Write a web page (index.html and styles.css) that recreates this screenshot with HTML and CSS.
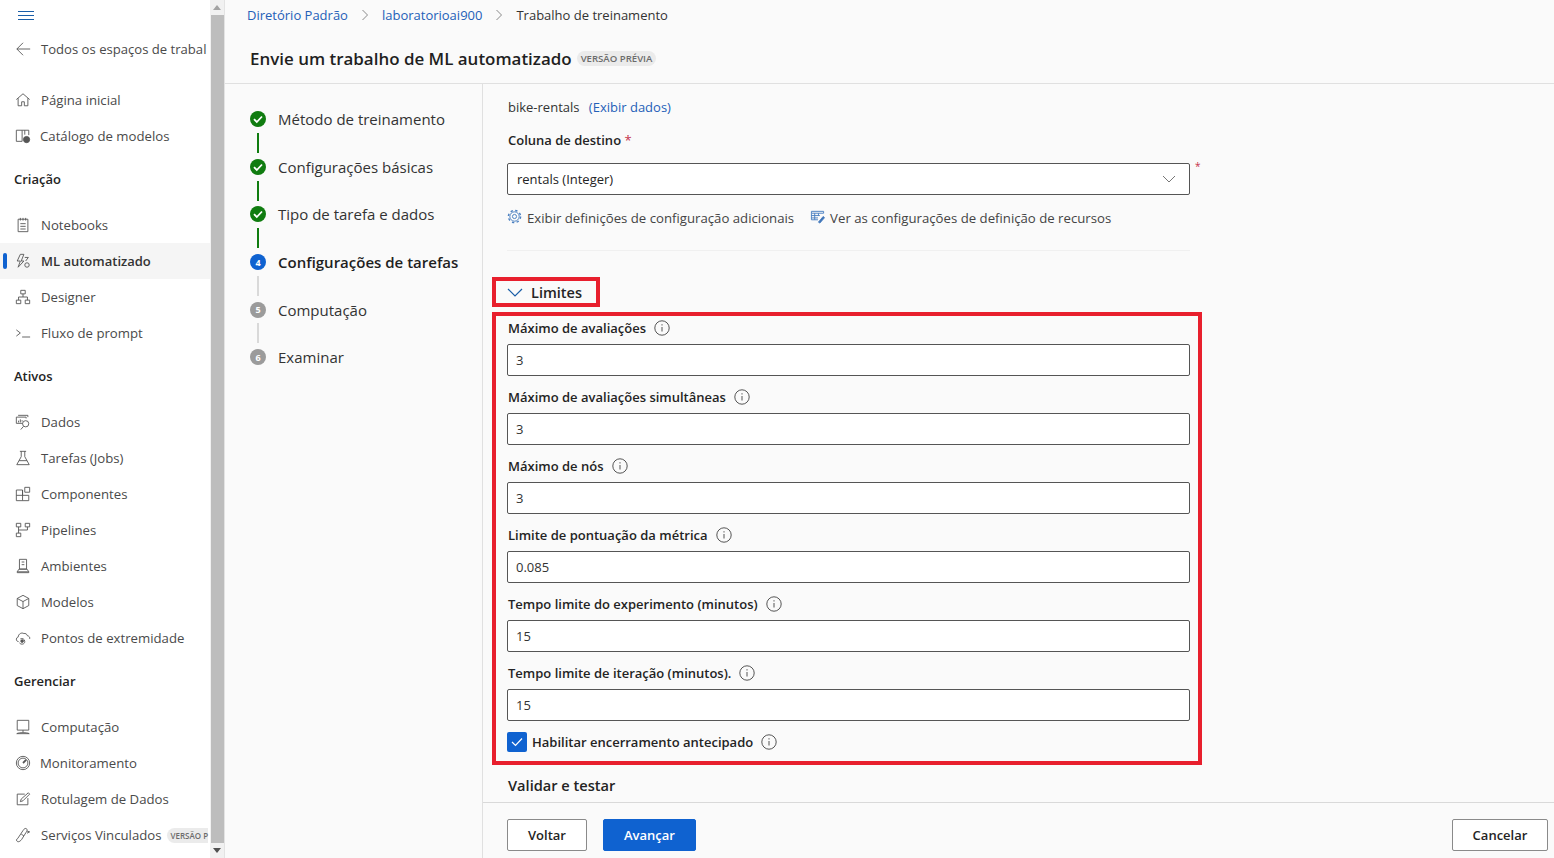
FILE: index.html
```html
<!DOCTYPE html>
<html lang="pt-BR">
<head>
    <meta charset="UTF-8">
    <meta name="viewport" content="width=device-width, initial-scale=1.0">
    <title>Trabalho de treinamento</title>
    <link rel="stylesheet" href="styles.css">
</head>
<body>

    <div class="sideBar">
        <div class="menuToggle">
            <svg width="16" height="10" viewBox="0 0 16 10"><path d="M0 .5h16M0 4.500h16M0 8.500h16" stroke="#1a5ea8" fill="none"/></svg>
        </div>

        <div class="navItem backItem">
            <svg class="navIcon" viewBox="0 0 18 18"><path d="M16.500 9H1.500M8.500 2l-7 7 7 7"/></svg>
            <span class="navText">Todos os espaços de trabal</span>
        </div>

        <div class="navGroup">
            <div class="navItem">
                <svg class="navIcon" viewBox="0 0 18 18"><path d="M1.500 8.500 9 2l7.500 6.500M3.500 7v8.500h4V11h3v4.500h4V7"/></svg>
                <span class="navText">Página inicial</span>
            </div>
            <div class="navItem tight">
                <svg class="navIcon" viewBox="0 0 18 18"><path d="M8 15H1.500V2.500H8zM8 2.500h7.500V8M11 2.500v5"/><circle cx="13" cy="13" r="3.500" fill="#555"/></svg>
                <span class="navText">Catálogo de modelos</span>
            </div>
        </div>

        <h3 class="navHeading">Criação</h3>
        <div class="navItem">
            <svg class="navIcon" viewBox="0 0 18 18"><path d="M3.500 2.500h11v14h-11zM6 1v3M9 1v3M12 1v3M6 7.500h6M6 10.500h6M6 13.500h6"/></svg>
            <span class="navText">Notebooks</span>
        </div>
        <div class="navItem active">
            <svg class="navIcon" viewBox="0 0 18 18"><path d="M10 1.500H6L2.500 9H6l-2.500 7L10 9H7zM11 5h4l-3 4"/><circle cx="13.500" cy="13.500" r="2.500"/></svg>
            <span class="navText">ML automatizado</span>
        </div>
        <div class="navItem">
            <svg class="navIcon" viewBox="0 0 18 18"><path d="M6.500 1.500h5v4h-5zM1.500 12.500h5v4h-5zM11.500 12.500h5v4h-5zM9 5.500V9M4 12.500V9h10v3.500"/></svg>
            <span class="navText">Designer</span>
        </div>
        <div class="navItem">
            <svg class="navIcon" viewBox="0 0 18 18"><path d="m1.500 5.500 4.500 3.500-4.500 3.500M8 13.500h9"/></svg>
            <span class="navText">Fluxo de prompt</span>
        </div>

        <h3 class="navHeading">Ativos</h3>
        <div class="navItem">
            <svg class="navIcon" viewBox="0 0 18 18"><path d="M3.500 1.500h11v2M1.500 3.500h11V5M1.500 3.500v7h7M4 7.500v2M6 6v3.500M8 7v1.500M9.500 14l-3 3.500"/><circle cx="12" cy="11" r="3.500"/></svg>
            <span class="navText">Dados</span>
        </div>
        <div class="navItem">
            <svg class="navIcon" viewBox="0 0 18 18"><path d="M5.500 1.500h7M7 1.500v6L2 16.500h14l-5-9v-6M4.500 12h9"/></svg>
            <span class="navText">Tarefas (Jobs)</span>
        </div>
        <div class="navItem">
            <svg class="navIcon" viewBox="0 0 18 18"><path d="M1.500 4.500h7v12h-7zM1.500 10.500h14v6h-7M8.500 4.500v6M11 1.500h5.500V7H11z"/></svg>
            <span class="navText">Componentes</span>
        </div>
        <div class="navItem">
            <svg class="navIcon" viewBox="0 0 18 18"><path d="M1.500 1.500h5v4h-5zM11.500 1.500h5v4h-5zM1.500 12.500h5v4h-5zM4 5.500v7M4 9h10V5.500"/></svg>
            <span class="navText">Pipelines</span>
        </div>
        <div class="navItem">
            <svg class="navIcon" viewBox="0 0 18 18"><path d="M5 1.500h8v11H5zM7.500 4.500h3M7.500 7.500h3M2.500 15.500l2-3h9l2 3zM2.500 15.500v1h13v-1"/></svg>
            <span class="navText">Ambientes</span>
        </div>
        <div class="navItem">
            <svg class="navIcon" viewBox="0 0 18 18"><path d="m9 1.500 6.500 3.500v8L9 16.500 2.500 13V5zM2.500 5 9 8.500 15.500 5M9 8.500v8"/></svg>
            <span class="navText">Modelos</span>
        </div>
        <div class="navItem">
            <svg class="navIcon" viewBox="0 0 18 18"><path d="M4 13C1.500 13 1 10.500 2 9c.3-.5 1-1 1.500-1C4 4 7.500 2.500 10 4c1.500-.5 3.500.5 4 2.500 2 .3 3 1.800 2.500 3.500M5 14.500c2 2.500 6 1.500 6-1.500s-3-4-5-3"/><circle cx="8" cy="12.500" r="1.500" fill="#555"/></svg>
            <span class="navText">Pontos de extremidade</span>
        </div>

        <h3 class="navHeading">Gerenciar</h3>
        <div class="navItem">
            <svg class="navIcon" viewBox="0 0 18 18"><path d="M2.500 1.500h13v11h-13zM9 12.500v2.500M2 16.500c2-1.500 12-1.500 14 0z"/></svg>
            <span class="navText">Computação</span>
        </div>
        <div class="navItem tight">
            <svg class="navIcon" viewBox="0 0 18 18"><circle cx="9" cy="9" r="7.500"/><circle cx="9" cy="9" r="5.500"/><path d="m9 9 3.500-3.500" stroke-width="2"/></svg>
            <span class="navText">Monitoramento</span>
        </div>
        <div class="navItem">
            <svg class="navIcon" viewBox="0 0 18 18"><path d="M14.500 8v7.500h-12v-12H11M6 12l1-3 8-7 1.500 1.500-7.500 7.500z"/></svg>
            <span class="navText">Rotulagem de Dados</span>
        </div>
        <div class="navItem">
            <svg class="navIcon" viewBox="0 0 18 18"><path d="M3 16.500c-2-1-1.500-3 0-3.500l6-9c1-2 3-3 4-2s.5 2.500-.5 4l-5 8c-1 1.500-3 3-4.500 2.500zM7 8l3 2M13.500 4.500l3 1-3 1.500"/></svg>
            <span class="navText">Serviços Vinculados</span>
            <span class="previewBadge small">VERSÃO P</span>
        </div>
    </div>

    <div class="scrollTrack">
        <div class="arrowUp"></div>
        <div class="scrollThumb"></div>
        <div class="arrowDown"></div>
    </div>

    <div class="mainArea">
        <div class="pageHeader">
            <div class="breadcrumb">
                <a class="link">Diretório Padrão</a>
                <svg class="crumbSep" viewBox="0 0 8 12"><path d="m1.500 1 5 5-5 5"/></svg>
                <a class="link">laboratorioai900</a>
                <svg class="crumbSep" viewBox="0 0 8 12"><path d="m1.500 1 5 5-5 5"/></svg>
                <span>Trabalho de treinamento</span>
            </div>
            <div class="titleRow">
                <h1>Envie um trabalho de ML automatizado</h1>
                <span class="previewBadge">VERSÃO PRÉVIA</span>
            </div>
        </div>

        <div class="pageBody">
            <div class="stepList">
                <div class="step">
                    <span class="stepDot done"><svg width="10" height="10" viewBox="0 0 10 10"><path d="m1 5.200 2.800 2.800L9 2.500" stroke="#fff" stroke-width="1.800" fill="none"/></svg></span>
                    <span>Método de treinamento</span>
                </div>
                <div class="stepLine done"></div>
                <div class="step">
                    <span class="stepDot done"><svg width="10" height="10" viewBox="0 0 10 10"><path d="m1 5.200 2.800 2.800L9 2.500" stroke="#fff" stroke-width="1.800" fill="none"/></svg></span>
                    <span>Configurações básicas</span>
                </div>
                <div class="stepLine done"></div>
                <div class="step">
                    <span class="stepDot done"><svg width="10" height="10" viewBox="0 0 10 10"><path d="m1 5.200 2.800 2.800L9 2.500" stroke="#fff" stroke-width="1.800" fill="none"/></svg></span>
                    <span>Tipo de tarefa e dados</span>
                </div>
                <div class="stepLine done"></div>
                <div class="step current">
                    <span class="stepDot">4</span>
                    <span>Configurações de tarefas</span>
                </div>
                <div class="stepLine"></div>
                <div class="step">
                    <span class="stepDot">5</span>
                    <span>Computação</span>
                </div>
                <div class="stepLine"></div>
                <div class="step">
                    <span class="stepDot">6</span>
                    <span>Examinar</span>
                </div>
            </div>

            <div class="rightColumn">
                <div class="formArea">
                    <div class="dataRow">bike-rentals <a class="link">(Exibir dados)</a></div>
                    <div class="targetLabel">Coluna de destino <span class="required">*</span></div>
                    <div class="selectRow">
                        <div class="selectBox">
                            <span>rentals (Integer)</span>
                            <svg width="14" height="8" viewBox="0 0 14 8"><path d="m1 1 6 6 6-6" stroke="#777" fill="none"/></svg>
                        </div>
                        <span class="required sideMark">*</span>
                    </div>
                    <div class="actionRow">
                        <span class="actionLink">
                            <svg class="actionIcon" viewBox="0 0 16 16"><circle cx="8" cy="8" r="2.200"/><circle cx="8" cy="8" r="5"/><circle cx="8" cy="8" r="6.500" stroke-width="1.500" stroke-dasharray="2.500 2.605"/></svg>
                            Exibir definições de configuração adicionais
                        </span>
                        <span class="actionLink">
                            <svg class="actionIcon" viewBox="0 0 16 16"><path d="M1.500 2.500h13v2h-13zM1.500 4.500v7h7M1.500 7h9M1.500 9.500h7M5 4.500v7M9 4.500V7"/><path d="m9 14 5-6 1.500 1.200-5 5.800z" fill="#3a6fb5"/></svg>
                            Ver as configurações de definição de recursos
                        </span>
                    </div>
                    <div class="divider"></div>

                    <div class="limitsTitle">
                        <svg width="16" height="9" viewBox="0 0 16 9"><path d="m1 1 7 7 7-7" stroke="#1a5ea8" stroke-width="1.200" fill="none"/></svg>
                        <span>Limites</span>
                    </div>

                    <div class="limitsBox">
                        <div class="field">
                            <label>Máximo de avaliações <svg class="infoIcon" viewBox="0 0 16 16"><circle cx="8" cy="8" r="7.200"/><path d="M8 7v4.500M8 4.200v1.300"/></svg></label>
                            <input class="textInput" type="text" value="3">
                        </div>
                        <div class="field">
                            <label>Máximo de avaliações simultâneas <svg class="infoIcon" viewBox="0 0 16 16"><circle cx="8" cy="8" r="7.200"/><path d="M8 7v4.500M8 4.200v1.300"/></svg></label>
                            <input class="textInput" type="text" value="3">
                        </div>
                        <div class="field">
                            <label>Máximo de nós <svg class="infoIcon" viewBox="0 0 16 16"><circle cx="8" cy="8" r="7.200"/><path d="M8 7v4.500M8 4.200v1.300"/></svg></label>
                            <input class="textInput" type="text" value="3">
                        </div>
                        <div class="field">
                            <label>Limite de pontuação da métrica <svg class="infoIcon" viewBox="0 0 16 16"><circle cx="8" cy="8" r="7.200"/><path d="M8 7v4.500M8 4.200v1.300"/></svg></label>
                            <input class="textInput" type="text" value="0.085">
                        </div>
                        <div class="field">
                            <label>Tempo limite do experimento (minutos) <svg class="infoIcon" viewBox="0 0 16 16"><circle cx="8" cy="8" r="7.200"/><path d="M8 7v4.500M8 4.200v1.300"/></svg></label>
                            <input class="textInput" type="text" value="15">
                        </div>
                        <div class="field">
                            <label>Tempo limite de iteração (minutos). <svg class="infoIcon" viewBox="0 0 16 16"><circle cx="8" cy="8" r="7.200"/><path d="M8 7v4.500M8 4.200v1.300"/></svg></label>
                            <input class="textInput" type="text" value="15">
                        </div>
                        <div class="checkRow">
                            <span class="checkBox"><svg width="14" height="12" viewBox="0 0 14 12"><path d="m2 6 3.500 3.500L12 2.500" stroke="#fff" stroke-width="1.200" fill="none"/></svg></span>
                            <span>Habilitar encerramento antecipado</span>
                            <svg class="infoIcon" viewBox="0 0 16 16"><circle cx="8" cy="8" r="7.200"/><path d="M8 7v4.500M8 4.200v1.300"/></svg>
                        </div>
                    </div>

                    <div class="validateTitle">Validar e testar</div>
                </div>

                <div class="pageFooter">
                    <button class="btn">Voltar</button>
                    <button class="btn primary">Avançar</button>
                    <button class="btn cancel">Cancelar</button>
                </div>
            </div>
        </div>
    </div>

</body>
</html>
```

FILE: styles.css
```css
body {
    font-family: "Open Sans", "Noto Sans", sans-serif;
    margin: 0;
    padding: 0;
    height: 858px;
    display: flex;
    background-color: #fafafa;
    color: #242424;
    font-size: 13px;
    overflow: hidden;
}

.link {
    color: #2460b8;
}

/* barra lateral */
.sideBar {
    width: 210px;
    flex-shrink: 0;
    background-color: #fff;
    overflow: hidden;
    color: #4a4a4a;
    font-size: 13.200px;
}

.menuToggle {
    height: 31px;
    padding-left: 18px;
    padding-top: 11px;
    box-sizing: border-box;
}

.menuToggle svg {
    display: block;
}

.navItem {
    display: flex;
    align-items: center;
    height: 36px;
    padding-left: 15px;
    white-space: nowrap;
}

.navItem.backItem {
    font-size: 13.100px;
}

.navItem.tight .navText {
    margin-left: -1px;
}

.navItem.active {
    background-color: #f5f5f5;
    color: #333;
    font-size: 13px;
    font-weight: 600;
    position: relative;
}

.navItem.active::before {
    content: "";
    position: absolute;
    left: 3px;
    top: 10px;
    width: 4px;
    height: 16px;
    border-radius: 2px;
    background-color: #0f62d0;
}

.navIcon {
    width: 16px;
    height: 16px;
    flex-shrink: 0;
    margin-right: 10px;
    fill: none;
    stroke: #555;
    stroke-width: 1;
}

.backItem .navIcon {
    width: 17px;
    margin-right: 9px;
}

.navGroup {
    margin-top: 15px;
}

.navHeading {
    margin: 15px 0 18px 14px;
    height: 20px;
    line-height: 20px;
    font-size: 13px;
    font-weight: 600;
    color: #242424;
}

.previewBadge {
    display: inline-block;
    padding: 0 4px;
    height: 15px;
    line-height: 15px;
    border-radius: 8px;
    background-color: #ebebeb;
    color: #6b6b6b;
    font-size: 9.600px;
    font-weight: 600;
    white-space: nowrap;
}

.previewBadge.small {
    margin-left: 5px;
    padding: 0 0 0 4px;
    border-radius: 8px 0 0 8px;
    font-size: 8px;
    flex-shrink: 0;
}

/* barra de rolagem */
.scrollTrack {
    width: 15px;
    flex-shrink: 0;
    background-color: #f1f1f1;
    border-right: 1px solid #e3e3e3;
    box-sizing: border-box;
    display: flex;
    flex-direction: column;
    align-items: center;
}

.scrollThumb {
    flex: 1;
    width: 13px;
    background-color: #bdbdbd;
}

.arrowUp,
.arrowDown {
    width: 0;
    height: 0;
    margin: 5px 0;
    border-left: 4px solid transparent;
    border-right: 4px solid transparent;
}

.arrowUp {
    border-bottom: 5px solid #a3a3a3;
}

.arrowDown {
    border-top: 5px solid #505050;
}

/* area principal */
.mainArea {
    flex: 1;
    min-width: 0;
    display: flex;
    flex-direction: column;
}

.pageHeader {
    height: 84px;
    flex-shrink: 0;
    box-sizing: border-box;
    border-bottom: 1px solid #e0e0e0;
    padding-top: 5px;
}

.breadcrumb {
    display: flex;
    align-items: center;
    height: 20px;
    padding-left: 22px;
    color: #333;
}

.crumbSep {
    width: 8px;
    height: 12px;
    margin: 0 13px;
    fill: none;
    stroke: #8a8a8a;
}

.titleRow {
    display: flex;
    align-items: center;
    height: 28px;
    margin-top: 19px;
    padding-left: 25px;
}

.titleRow h1 {
    margin: 0 5px 0 0;
    font-size: 16.950px;
    font-weight: 600;
    color: #1f1f1f;
}

.pageBody {
    flex: 1;
    min-height: 0;
    display: flex;
}

/* etapas */
.stepList {
    width: 258px;
    flex-shrink: 0;
    box-sizing: border-box;
    border-right: 1px solid #e0e0e0;
    padding: 23.500px 0 0 25px;
}

.step {
    display: flex;
    align-items: center;
    height: 23.600px;
    font-size: 15px;
    color: #333;
}

.step.current {
    font-weight: 600;
    color: #1f1f1f;
}

.stepDot {
    width: 16px;
    height: 16px;
    border-radius: 50%;
    margin-right: 12px;
    flex-shrink: 0;
    display: flex;
    align-items: center;
    justify-content: center;
    background-color: #9b9b9b;
    color: #fff;
    font-size: 9px;
    font-weight: 700;
}

.stepDot.done {
    background-color: #107c10;
}

.step.current .stepDot {
    background-color: #0f62d0;
}

.stepLine {
    width: 2px;
    height: 20px;
    margin: 2px 0 2px 7px;
    background-color: #d9d9d9;
}

.stepLine.done {
    background-color: #107c10;
}

/* formulario */
.rightColumn {
    flex: 1;
    min-width: 0;
    display: flex;
    flex-direction: column;
}

.formArea {
    flex: 1;
    min-height: 0;
    padding-left: 24px;
    overflow: hidden;
}

.dataRow {
    margin-top: 13px;
    padding-left: 1px;
    height: 20px;
    line-height: 20px;
    color: #333;
}

.dataRow .link {
    margin-left: 6px;
}

.targetLabel {
    margin-top: 13px;
    padding-left: 1px;
    height: 20px;
    line-height: 20px;
    font-weight: 600;
}

.required {
    color: #c4314b;
    font-weight: 400;
}

.selectRow {
    display: flex;
    margin-top: 13px;
}

.selectBox {
    width: 683px;
    height: 32px;
    box-sizing: border-box;
    border: 1px solid #555;
    border-radius: 2px;
    background-color: #fff;
    padding: 0 13px 0 9px;
    display: flex;
    align-items: center;
    justify-content: space-between;
}

.sideMark {
    margin-left: 5px;
    font-size: 10px;
    line-height: 7px;
}

.actionRow {
    display: flex;
    gap: 16px;
    margin-top: 13px;
    height: 20px;
    line-height: 20px;
    font-size: 13.200px;
}

.actionLink {
    display: flex;
    align-items: center;
    color: #444;
}

.actionIcon {
    width: 15px;
    height: 15px;
    margin-right: 5px;
    margin-top: -3px;
    fill: none;
    stroke: #4a7fc0;
    stroke-width: 1;
}

.divider {
    width: 683px;
    height: 1px;
    margin-top: 22px;
    background-color: #f0f0f0;
}

.limitsTitle {
    display: inline-flex;
    align-items: center;
    gap: 8px;
    width: 108px;
    height: 30px;
    box-sizing: border-box;
    margin: 26px 0 0 -15px;
    padding-left: 11px;
    border: 4px solid #e81f2d;
    font-size: 14.500px;
    font-weight: 600;
    vertical-align: top;
}

.limitsBox {
    width: 710px;
    height: 453px;
    box-sizing: border-box;
    margin: 5px 0 0 -15px;
    border: 4px solid #e81f2d;
    padding: 2px 8px 0 11px;
}

.field {
    height: 69px;
}

.field label {
    display: flex;
    align-items: center;
    height: 20px;
    padding-left: 1px;
    font-weight: 600;
    margin-bottom: 6px;
}

.textInput {
    display: block;
    width: 100%;
    height: 32px;
    box-sizing: border-box;
    border: 1px solid #555;
    border-radius: 2px;
    background-color: #fff;
    padding: 0 8px;
    font-family: inherit;
    font-size: 13px;
    color: #333;
}

.infoIcon {
    width: 16px;
    height: 16px;
    margin-left: 8px;
    flex-shrink: 0;
    fill: none;
    stroke: #555;
    stroke-width: 1;
}

.checkRow {
    display: flex;
    align-items: center;
    height: 20px;
    font-weight: 600;
}

.checkBox {
    width: 20px;
    height: 20px;
    margin-right: 5px;
    border-radius: 2px;
    background-color: #0f62d0;
    display: flex;
    align-items: center;
    justify-content: center;
}

.validateTitle {
    margin-top: 9px;
    padding-left: 1px;
    height: 22px;
    line-height: 22px;
    font-size: 14.600px;
    font-weight: 600;
}

/* rodape */
.pageFooter {
    height: 56px;
    flex-shrink: 0;
    box-sizing: border-box;
    border-top: 1px solid #d9d9d9;
    display: flex;
    align-items: flex-start;
    gap: 16px;
    padding: 16px 6px 0 24px;
}

.btn {
    height: 32px;
    width: 80px;
    box-sizing: border-box;
    border: 1px solid #8a8a8a;
    border-radius: 2px;
    background-color: #fff;
    color: #242424;
    font-family: inherit;
    font-size: 13px;
    font-weight: 600;
}

.btn.primary {
    width: 93px;
    border-color: #0f62d0;
    background-color: #0f62d0;
    color: #fff;
}

.btn.cancel {
    width: 96px;
    margin-left: auto;
}
```
